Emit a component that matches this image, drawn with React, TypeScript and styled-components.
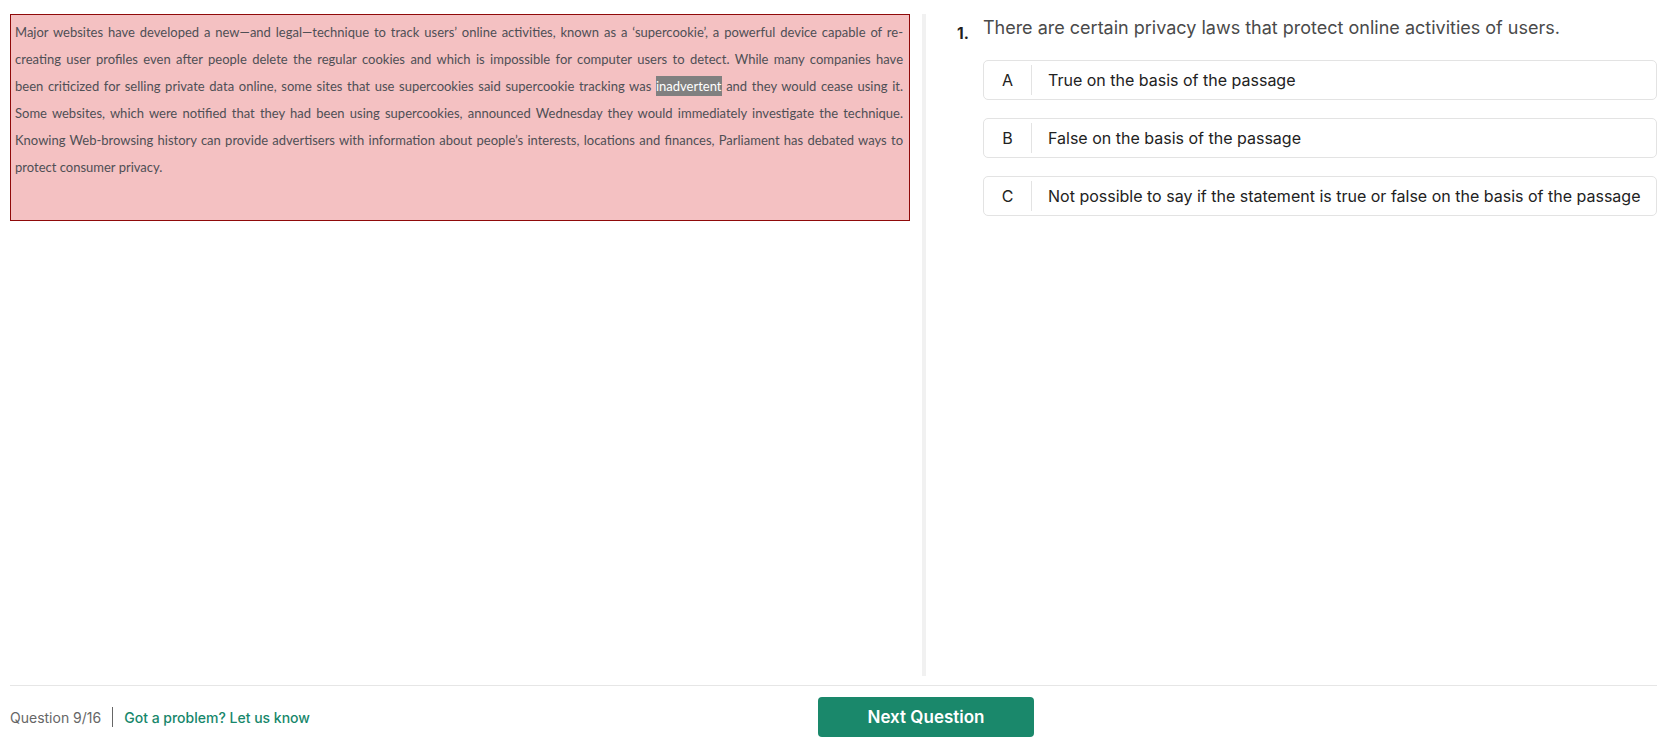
import React from "react";
import styled, { createGlobalStyle } from "styled-components";

const GlobalStyle = createGlobalStyle`
  html, body {
    margin: 0;
    padding: 0;
    background: #ffffff;
  }
  body {
    font-family: Inter, "Liberation Sans", sans-serif;
  }
`;

type Option = {
  key: string;
  label: string;
};

const passageLines: React.ReactNode[] = [
  "Major websites have developed a new\u2014and legal\u2014technique to track users\u2019 online activities, known as a \u2018supercookie\u2019, a powerful device capable of re-",
  "creating user profiles even after people delete the regular cookies and which is impossible for computer users to detect. While many companies have",
  <>
    been criticized for selling private data online, some sites that use supercookies said supercookie tracking was{" "}
    <Highlight>inadvertent</Highlight> and they would cease using it.
  </>,
  "Some websites, which were notified that they had been using supercookies, announced Wednesday they would immediately investigate the technique.",
  "Knowing Web-browsing history can provide advertisers with information about people\u2019s interests, locations and finances, Parliament has debated ways to",
  "protect consumer privacy.",
];

const options: Option[] = [
  { key: "A", label: "True on the basis of the passage" },
  { key: "B", label: "False on the basis of the passage" },
  { key: "C", label: "Not possible to say if the statement is true or false on the basis of the passage" },
];

const Page = styled.div`
  width: 1667px;
  height: 738px;
  display: flex;
  flex-direction: column;
  overflow: hidden;
`;

const Main = styled.div`
  display: flex;
  height: 685px;
  padding: 14px 10px 0;
  box-sizing: border-box;
`;

const PassagePane = styled.div`
  width: 900px;
  flex-shrink: 0;
`;

const PassageBox = styled.div`
  height: 207px;
  box-sizing: border-box;
  border: 1px solid #8f0a0a;
  background: #f4c1c2;
  padding: 4px 6px 0 4px;
  font-family: Lato, "Open Sans", sans-serif;
  font-size: 13px;
  color: #4f4f55;
`;

const PassageLine = styled.div<{ last?: boolean }>`
  line-height: 27px;
  height: 27px;
  white-space: nowrap;
  text-align: ${(p) => (p.last ? "left" : "justify")};
  text-align-last: ${(p) => (p.last ? "left" : "justify")};
`;

function Highlight({ children }: { children: React.ReactNode }) {
  return <Marked>{children}</Marked>;
}

const Marked = styled.span`
  background: #808080;
  color: #ffffff;
  padding: 2px 0;
`;

const Divider = styled.div`
  width: 4px;
  height: 662px;
  margin-left: 12px;
  background: #f1f1f1;
  flex-shrink: 0;
`;

const QuestionPane = styled.div`
  flex: 1;
  padding: 2px 0 0 31px;
`;

const QuestionRow = styled.div`
  display: flex;
  align-items: flex-start;
  gap: 14px;
  height: 24px;
`;

const QuestionNumber = styled.span`
  font-size: 15.5px;
  font-weight: 700;
  line-height: 24px;
  margin-top: 6px;
  color: #1f1f1f;
`;

const QuestionText = styled.span`
  font-size: 18px;
  line-height: 24px;
  color: #4a4a4a;
`;

const OptionList = styled.div`
  display: flex;
  flex-direction: column;
  gap: 18px;
  margin: 20px 0 0 26px;
`;

const OptionBox = styled.div`
  display: flex;
  align-items: center;
  height: 40px;
  box-sizing: border-box;
  border: 1px solid #e3e3e3;
  border-radius: 5px;
  font-size: 16px;
  color: #222222;
  cursor: pointer;
`;

const OptionKey = styled.span`
  width: 47px;
  align-self: stretch;
  margin: 4px 0;
  display: flex;
  align-items: center;
  justify-content: center;
  border-right: 1px solid #e3e3e3;
`;

const OptionLabel = styled.span`
  padding-left: 16px;
`;

const Footer = styled.div`
  margin: 0 10px;
  border-top: 1px solid #e6e6e6;
  display: grid;
  grid-template-columns: 808px 216px 1fr;
  align-items: center;
  padding-top: 11px;
`;

const FooterInfo = styled.div`
  display: flex;
  align-items: center;
  font-size: 14px;
`;

const QuestionCount = styled.span`
  color: #666666;
`;

const Separator = styled.span`
  width: 1px;
  height: 20px;
  background: #666666;
  margin: 0 11px 0 11px;
`;

const ProblemLink = styled.a`
  color: #17876b;
  font-weight: 500;
  text-decoration: none;
  cursor: pointer;
`;

const NextButton = styled.button`
  height: 40px;
  border: none;
  border-radius: 4px;
  background: #1a886b;
  color: #ffffff;
  font-family: Inter, "Liberation Sans", sans-serif;
  font-size: 17px;
  font-weight: 600;
  cursor: pointer;
`;

export default function App() {
  return (
    <Page>
      <GlobalStyle />
      <Main>
        <PassagePane>
          <PassageBox>
            {passageLines.map((line, i) => (
              <PassageLine key={i} last={i === passageLines.length - 1}>
                {line}
              </PassageLine>
            ))}
          </PassageBox>
        </PassagePane>
        <Divider />
        <QuestionPane>
          <QuestionRow>
            <QuestionNumber>1.</QuestionNumber>
            <QuestionText>There are certain privacy laws that protect online activities of users.</QuestionText>
          </QuestionRow>
          <OptionList>
            {options.map((opt) => (
              <OptionBox key={opt.key}>
                <OptionKey>{opt.key}</OptionKey>
                <OptionLabel>{opt.label}</OptionLabel>
              </OptionBox>
            ))}
          </OptionList>
        </QuestionPane>
      </Main>
      <Footer>
        <FooterInfo>
          <QuestionCount>Question 9/16</QuestionCount>
          <Separator />
          <ProblemLink>Got a problem? Let us know</ProblemLink>
        </FooterInfo>
        <NextButton>Next Question</NextButton>
      </Footer>
    </Page>
  );
}
